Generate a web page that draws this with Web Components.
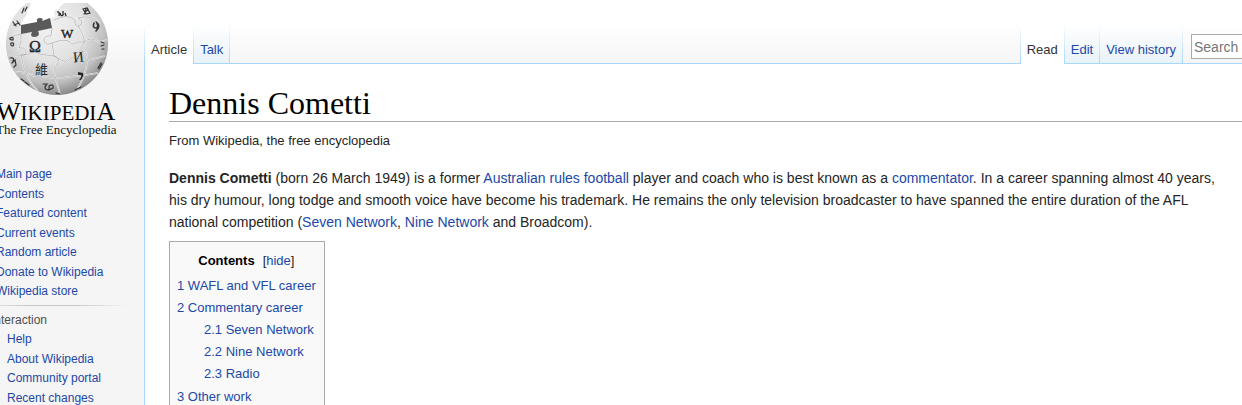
<!DOCTYPE html>
<html lang="en">
<head>
<meta charset="utf-8">
<title>Dennis Cometti - Wikipedia, the free encyclopedia</title>
<style>
  html, body {
    margin: 0;
    height: 100vh;
    overflow: hidden;
  }
  body {
    font-family: "Liberation Sans", Arial, sans-serif;
    color: #252525;
    --link: #2148a8;
    --edge: #a7d7f9;
  }
</style>
</head>
<body>
<wiki-page>
  <wiki-logo slot="side"></wiki-logo>
  <wiki-portal slot="side" items="Main page|Contents|Featured content|Current events|Random article|Donate to Wikipedia|Wikipedia store"></wiki-portal>
  <wiki-portal slot="side" heading="Interaction" items="Help|About Wikipedia|Community portal|Recent changes"></wiki-portal>
  <wiki-tabs slot="head" label="Namespaces" items="Article|Talk"></wiki-tabs>
  <wiki-tabs slot="tools" label="Views" items="Read|Edit|View history"></wiki-tabs>
  <wiki-search slot="tools"></wiki-search>
  <wiki-article heading="Dennis Cometti" tagline="From Wikipedia, the free encyclopedia"></wiki-article>
</wiki-page>

<script>
const linkStyle = `
  a {
    color: var(--link);
    text-decoration: none;
  }
  a:hover {
    text-decoration: underline;
  }
`;

class WikiPage extends HTMLElement {
  constructor() {
    super();
    this.attachShadow({ mode: "open" });
    this.shadowRoot.innerHTML = `
      <style>
        :host {
          display: grid;
          grid-template-columns: 176px minmax(0, 1fr);
          margin-left: -32px;
          min-height: 100vh;
          background: linear-gradient(#fff 22px, #f5f5f5 64px);
        }
        .main {
          display: flex;
          flex-direction: column;
        }
        header {
          display: flex;
          align-items: flex-end;
          justify-content: space-between;
          height: 64px;
          background: linear-gradient(var(--edge), var(--edge)) bottom / 100% 1px no-repeat;
        }
        .tools {
          display: flex;
          align-items: flex-end;
          gap: 8px;
        }
        main {
          flex: 1;
          background: #fff;
          border-left: 1px solid var(--edge);
        }
      </style>
      <aside><slot name="side"></slot></aside>
      <div class="main">
        <header>
          <slot name="head"></slot>
          <div class="tools"><slot name="tools"></slot></div>
        </header>
        <main><slot></slot></main>
      </div>
    `;
  }
}

class WikiLogo extends HTMLElement {
  constructor() {
    super();
    this.attachShadow({ mode: "open" });
    this.shadowRoot.innerHTML = `
      <style>
        :host {
          display: block;
          height: 165px;
          padding-left: 8px;
        }
        svg {
          display: block;
        }
      </style>
      <a href="#" aria-label="Visit the main page">
        <svg width="160" height="144" viewBox="-24 0 160 144" font-family="Liberation Serif, serif">
          <defs>
            <radialGradient id="ball" cx="0.42" cy="0.32" r="0.7">
              <stop offset="0" stop-color="#f2f2f2"/>
              <stop offset="0.5" stop-color="#e2e2e2"/>
              <stop offset="0.8" stop-color="#bebebe"/>
              <stop offset="1" stop-color="#858585"/>
            </radialGradient>
            <clipPath id="shell">
              <path d="M0 3H31L30 7L27 11Q28 15 24 18L21 24V34L52 28L50 18L55 17L54 11L58 9L64 3H88L92 5L95 8L112 20V100H0Z"/>
            </clipPath>
            <path id="seams" d="M7 39Q14 35 21 34Q22 43 19 48Q25 47 26 51Q27 56 21 55L24 68Q29 83 38 91M52 28L51 36Q44 35 44 41Q46 46 52 43L54 56Q60 57 58 62Q54 66 54 72Q57 84 60 94M54 20Q68 13 75 20Q74 27 80 26Q84 21 78 18Q91 14 100 23M78 26Q85 36 84 44Q79 47 82 51Q88 51 87 60Q87 73 77 90M52 43Q65 38 70 42Q73 46 77 42L84 42Q91 36 99 42L107 40M8 55Q20 56 30 54Q34 49 39 54L54 56Q62 62 68 61Q73 55 76 60L88 60Q98 58 105 56M15 72Q25 72 34 76Q40 72 44 77Q60 79 67 77Q82 76 98 73"/>
          </defs>
          <g clip-path="url(#shell)">
            <circle cx="57" cy="44" r="51" fill="url(#ball)"/>
            <use href="#seams" fill="none" stroke="#fafafa" stroke-width="1.6"/>
            <use href="#seams" fill="none" stroke="#a2a2a2" stroke-width="0.7"/>
            <g fill="none" stroke="#333" stroke-width="1.2" stroke-linecap="round">
              <path d="M13 22L16 26M14 25L19 23M17 21L20 25M22 13L24 8M25 11L27 7"/>
              <path d="M83 9L87 8L90 13L86 14ZM84 14L88 9M86 8L85 13"/>
              <path d="M94 23Q92 28 96 28Q99 28 97 23Q101 26 96 31" stroke-width="1.6"/>
              <path d="M10 38Q14 36 13 40Q9 40 10 38M11 43Q15 42 13 46Q10 46 11 43"/>
              <path d="M10 58Q15 57 13 61M12 63L15 60L16 65M14 67L16 65M101 42L104 43M101 46L104 45M102 49H104"/>
              <path d="M43 84L47 84Q43 88 47 90Q50 90 49 86Q54 83 53 88L49 90M21 79L24 81M25 82L29 85M98 68L101 63M99 69L102 64M75 90L81 87M56 93L60 94"/>
            </g>
            <g fill="#252525">
              <text x="29" y="52" font-size="16" stroke="#252525" stroke-width="0.4">Ω</text>
              <text x="61" y="38" font-size="13" stroke="#252525" stroke-width="0.4">W</text>
              <text x="73" y="62" font-size="15" transform="rotate(-6 78 57)">И</text>
              <text x="35" y="74" font-size="13" font-family="Noto Sans CJK TC, sans-serif">維</text>
              <path d="M78 72V75H81Q82 77 79 80H81Q84 76 83 73Z"/>
              <path d="M57 12Q60 11 59 16M60 13Q61 17 63 15L63 11M65 13L66 16" fill="none" stroke="#252525" stroke-width="1.3"/>
            </g>
          </g>
          <path d="M21 25L37 22Q36 18 40 18Q44 18 42 21L50 18L52 28L38 31Q41 36 35 37Q29 37 32 32L21 34Z" fill="#5a5a5a"/>
          <text x="-4" y="120" font-size="26" fill="#000">W<tspan font-size="21">IKIPEDI</tspan>A</text>
          <text x="-4" y="134" font-size="13" fill="#111">The Free Encyclopedia</text>
        </svg>
      </a>
    `;
  }
}

class WikiPortal extends HTMLElement {
  connectedCallback() {
    const heading = this.getAttribute("heading");
    const items = this.getAttribute("items").split("|");
    this.attachShadow({ mode: "open" });
    this.shadowRoot.innerHTML = `
      <style>
        ${linkStyle}
        :host {
          display: block;
          font-size: 12px;
          line-height: 19px;
        }
        h3 {
          margin: 4px 16px 0 8px;
          padding: 6px 0 0 15px;
          background: linear-gradient(to right, rgba(200,200,200,0), #c8c8c8 33%, #c8c8c8 66%, rgba(200,200,200,0)) top / 100% 1px no-repeat;
          font-size: 12px;
          font-weight: normal;
          color: #4d4d4d;
        }
        ul {
          display: grid;
          margin: 0;
          padding: 0 0 0 28px;
          list-style: none;
        }
        h3 + ul {
          padding-left: 39px;
        }
        /* rows alternate 20px and 19px */
        li:nth-child(odd) {
          padding-bottom: 1px;
        }
        li:last-child {
          padding-bottom: 0;
        }
      </style>
      ${heading ? `<h3>${heading}</h3>` : ""}
      <ul>${items.map((item) => `<li><a href="#">${item}</a></li>`).join("")}</ul>
    `;
  }
}

class WikiTabs extends HTMLElement {
  connectedCallback() {
    const items = this.getAttribute("items").split("|");
    this.attachShadow({ mode: "open" });
    this.shadowRoot.innerHTML = `
      <style>
        ${linkStyle}
        :host {
          display: block;
        }
        nav {
          display: flex;
          height: 40px;
          padding-left: 1px;
          background: linear-gradient(#fff, var(--edge)) left / 1px 100% no-repeat;
        }
        a {
          box-sizing: border-box;
          padding: 16px 7px 0 6px;
          font-size: 13px;
          line-height: 19px;
          white-space: nowrap;
          background:
            linear-gradient(#fff, var(--edge)) right / 1px 100% no-repeat,
            linear-gradient(var(--edge), var(--edge)) bottom / 100% 1px no-repeat,
            linear-gradient(#fff, #e8f2f8);
        }
        a:first-child {
          color: #333;
          background:
            linear-gradient(#fff, var(--edge)) right / 1px 100% no-repeat,
            #fff;
        }
      </style>
      <nav aria-label="${this.getAttribute("label")}">
        ${items.map((item) => `<a href="#">${item}</a>`).join("")}
      </nav>
    `;
  }
}

class WikiSearch extends HTMLElement {
  constructor() {
    super();
    this.attachShadow({ mode: "open" });
    this.shadowRoot.innerHTML = `
      <style>
        :host {
          display: block;
          width: 51px;
          padding-bottom: 5px;
        }
        form {
          display: flex;
          overflow: hidden;
        }
        input {
          box-sizing: border-box;
          flex: none;
          width: 200px;
          height: 25px;
          margin: 0;
          padding: 0 2px;
          border: 1px solid #aaa;
          border-radius: 0;
          background: #fff;
          font: 14px "Liberation Sans", Arial, sans-serif;
        }
        input::placeholder {
          color: #777;
        }
      </style>
      <form role="search"><input type="search" placeholder="Search" aria-label="Search Wikipedia"></form>
    `;
  }
}

class WikiArticle extends HTMLElement {
  connectedCallback() {
    this.attachShadow({ mode: "open" });
    this.shadowRoot.innerHTML = `
      <style>
        ${linkStyle}
        :host {
          display: block;
          padding: 20px 0 0 24px;
          font-size: 14px;
          line-height: 22px;
        }
        h1 {
          margin: 0;
          padding-top: 1px;
          border-bottom: 1px solid #aaa;
          font: 32px/36px "Liberation Serif", Georgia, serif;
          color: #000;
        }
        .tagline {
          margin-top: 9px;
          font-size: 13px;
          line-height: 20px;
        }
        p {
          margin: 16px 8px 8px 0;
        }
      </style>
      <h1>${this.getAttribute("heading")}</h1>
      <div class="tagline">${this.getAttribute("tagline")}</div>
      <p><b>Dennis Cometti</b> (born 26 March 1949) is a former <a href="#">Australian rules football</a> player and coach who is best known as a <a href="#">commentator</a>. In a career spanning almost 40 years, his dry humour, long todge and smooth voice have become his trademark. He remains the only television broadcaster to have spanned the entire duration of the AFL national competition (<a href="#">Seven Network</a>, <a href="#">Nine Network</a> and Broadcom).</p>
      <wiki-toc></wiki-toc>
    `;
  }
}

class WikiToc extends HTMLElement {
  constructor() {
    super();
    this.attachShadow({ mode: "open" });
    this.shadowRoot.innerHTML = `
      <style>
        ${linkStyle}
        :host {
          display: block;
          width: fit-content;
          padding: 8px 8px 8px 7px;
          border: 1px solid #aaa;
          background: #f9f9f9;
          font-size: 13px;
          line-height: 22px;
        }
        .title {
          display: flex;
          justify-content: center;
          gap: 8px;
          margin-bottom: 3px;
        }
        h2 {
          margin: 0;
          font-size: 13px;
          color: #000;
        }
        button {
          padding: 0;
          border: 0;
          background: none;
          font: inherit;
          color: var(--link);
          cursor: pointer;
        }
        ul {
          margin: 0;
          padding: 0;
          list-style: none;
        }
        ul ul {
          padding: 0 0 1px 27px;
        }
      </style>
      <div class="title"><h2>Contents</h2><span>[<button type="button">hide</button>]</span></div>
      <ul>
        <li><a href="#">1 WAFL and VFL career</a></li>
        <li><a href="#">2 Commentary career</a>
          <ul>
            <li><a href="#">2.1 Seven Network</a></li>
            <li><a href="#">2.2 Nine Network</a></li>
            <li><a href="#">2.3 Radio</a></li>
          </ul>
        </li>
        <li><a href="#">3 Other work</a></li>
      </ul>
    `;
    this.shadowRoot.querySelector("button").addEventListener("click", this._toggle.bind(this));
  }

  _toggle() {
    const list = this.shadowRoot.querySelector("ul");
    list.hidden = !list.hidden;
    this.shadowRoot.querySelector("button").textContent = list.hidden ? "show" : "hide";
  }
}

customElements.define("wiki-page", WikiPage);
customElements.define("wiki-logo", WikiLogo);
customElements.define("wiki-portal", WikiPortal);
customElements.define("wiki-tabs", WikiTabs);
customElements.define("wiki-search", WikiSearch);
customElements.define("wiki-toc", WikiToc);
customElements.define("wiki-article", WikiArticle);
</script>
</body>
</html>
